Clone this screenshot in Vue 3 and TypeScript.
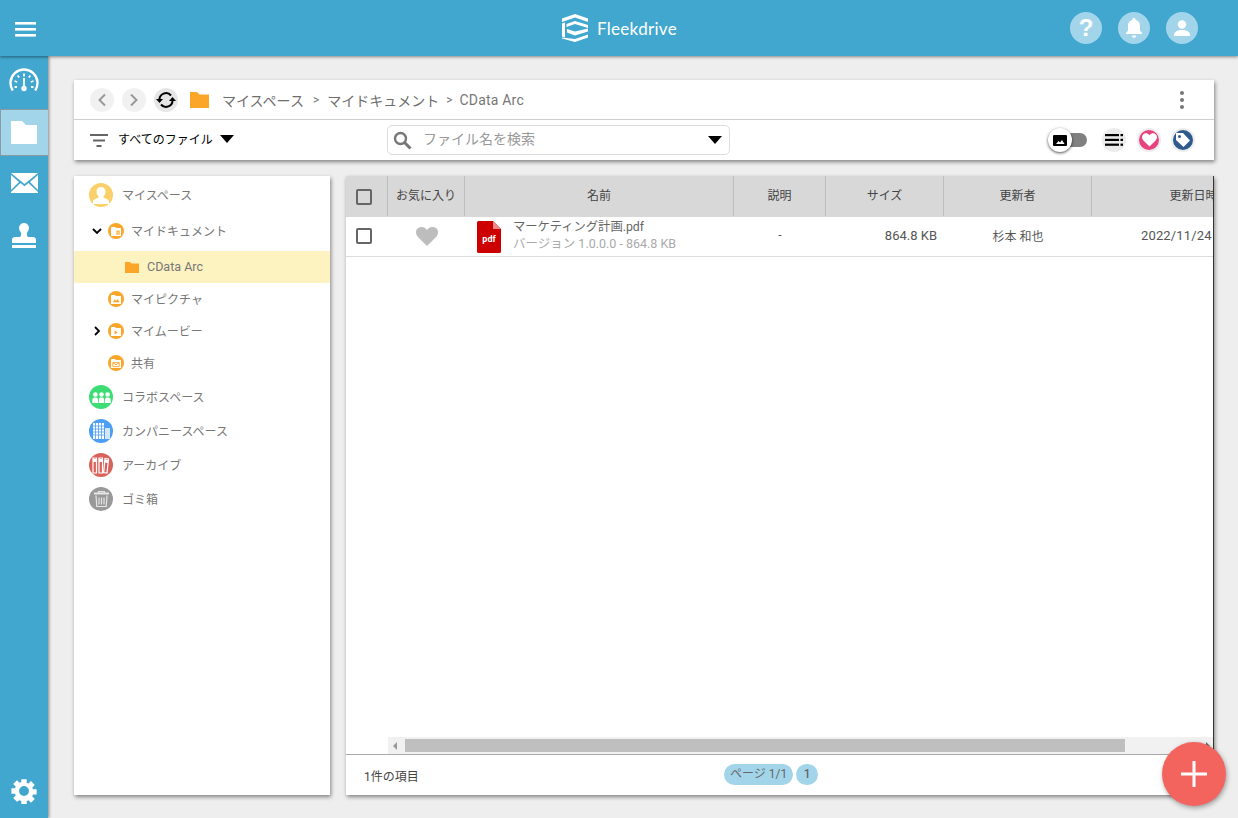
<script setup lang="ts">
interface TreeRow {
  label: string
  level: 'root' | 'child' | 'leaf'
  color?: string
  chevron?: 'down' | 'right'
  icon: string
  active?: boolean
}
const rows: TreeRow[] = [
  { label: 'マイスペース', level: 'root', color: '#fbd06b', icon: 'user' },
  { label: 'マイドキュメント', level: 'child', color: '#fba629', chevron: 'down', icon: 'doc' },
  { label: 'CData Arc', level: 'leaf', icon: 'folder', active: true },
  { label: 'マイピクチャ', level: 'child', color: '#fba629', icon: 'pic' },
  { label: 'マイムービー', level: 'child', color: '#fba629', chevron: 'right', icon: 'movie' },
  { label: '共有', level: 'child', color: '#fba629', icon: 'share' },
  { label: 'コラボスペース', level: 'root', color: '#3ddc75', icon: 'team' },
  { label: 'カンパニースペース', level: 'root', color: '#4d9ff5', icon: 'company' },
  { label: 'アーカイブ', level: 'root', color: '#d9635c', icon: 'archive' },
  { label: 'ゴミ箱', level: 'root', color: '#999999', icon: 'trash' },
]
</script>

<template>
  <div class="app">
    <header class="topbar">
      <svg class="burger" width="22" height="16" viewBox="0 0 22 16" fill="#fff">
        <rect x="0" y="0" width="21" height="2.6" /><rect x="0" y="6" width="21" height="2.6" /><rect x="0" y="12" width="21" height="2.6" />
      </svg>
      <div class="brand">
        <svg width="28" height="28" viewBox="0 0 28 28" fill="#fff">
          <path d="M14 0 27 4.500V8L14 3.500 1 8V4.500Z" />
          <path d="M1 9.500 4 8.500V23.500L1 22.500Z" />
          <path d="M5.500 10 14 7 27 11V14L14 10 5.500 13Z" />
          <path d="M6 15 14 17.500 27 14.500V17.500L14 21.500 6 18.500Z" />
          <path d="M1 23.500 14 25 27 20.500V23.500L14 28 1 24.500Z" />
        </svg>
        <span class="brand-name">Fleekdrive</span>
      </div>
      <div class="top-actions">
        <span class="top-circle"><span class="q">?</span></span>
        <span class="top-circle">
          <svg width="20" height="22" viewBox="0 0 20 22" fill="#fff"><path d="M10 1a1.6 1.6 0 0 1 1.6 1.8C14.6 3.6 16 6 16 9v4.5l2 2.500v1H2v-1l2-2.500V9c0-3 1.400-5.400 4.400-6.200A1.600 1.600 0 0 1 10 1z" /><path d="M7.800 18.500h4.400a2.200 2.200 0 0 1-4.400 0z" /></svg>
        </span>
        <span class="top-circle">
          <svg width="20" height="20" viewBox="0 0 20 20" fill="#fff"><circle cx="10" cy="6.500" r="4.200" /><path d="M2 17c0-3.500 3.500-5 8-5s8 1.500 8 5v1H2z" /></svg>
        </span>
      </div>
    </header>

    <div class="body">
      <nav class="rail">
        <div class="rail-item dash">
          <svg width="30" height="24" viewBox="0 0 30 24" fill="none" stroke="#fff" stroke-width="2.400">
            <path d="M3.800 22.500A13.500 13.500 0 1 1 26.200 22.500" />
            <path d="M15 5.500v3M8.500 7.500l1.800 2M21.500 7.500l-1.800 2M5.500 13l2.700 1M24.500 13l-2.700 1" stroke-width="1.800" />
            <path d="M5.500 19h2.500M24.500 19h-2.500" stroke-width="1.800" />
            <path d="M15 10v10" stroke-width="1.800" />
            <circle cx="15" cy="20.500" r="2.700" fill="#fff" stroke="none" />
          </svg>
        </div>
        <div class="rail-item active">
          <svg width="26" height="23" viewBox="0 0 26 23" fill="#fff"><path d="M0 0h11l4 4h11v19H0z" /></svg>
        </div>
        <div class="rail-item mail">
          <svg width="27" height="20" viewBox="0 0 27 20" fill="#fff"><path d="M0 0h27L13.500 11z" /><path d="M0 2l8 7-8 8zM27 2l-8 7 8 8zM0 19l9.500-9 4 3.300 4-3.300 9.500 9v1H0z" /></svg>
        </div>
        <div class="rail-item stamp">
          <svg width="24" height="26" viewBox="0 0 24 26" fill="#fff"><path d="M12 0a5 5 0 0 1 5 5c0 2-1.500 3.500-2 5-.400 1.500 0 3 1 4h5c1.600 0 3 1.200 3 3v3H0v-3c0-1.800 1.400-3 3-3h5c1-1 1.400-2.500 1-4-.500-1.500-2-3-2-5a5 5 0 0 1 5-5z" /><rect x="0" y="22" width="24" height="3" rx="0.500" /></svg>
        </div>
        <div class="rail-gear">
          <svg width="26" height="26" viewBox="0 0 26 26">
            <path fill="#fff" fill-rule="evenodd" d="M10 0h6v4l2 .800 2.800-2.800 4.200 4.200-2.800 2.800.800 2h4v6h-4l-.800 2 2.800 2.800-4.200 4.200-2.800-2.800-2 .800v4h-6v-4l-2-.800L5.200 25 1 20.800 3.800 18 3 16H-1v-6h4l.800-2L1 5.200 5.200 1 8 3.800 10 3zM13 7.500a5.500 5.500 0 1 0 0 11 5.500 5.500 0 0 0 0-11z" transform="translate(1.300 1.300) scale(0.900)" />
          </svg>
        </div>
      </nav>

      <main class="main">
        <section class="toolbar">
          <div class="crumbs">
            <span class="nav-btn">
              <svg width="10" height="14" viewBox="0 0 10 14" fill="none" stroke="#999" stroke-width="2"><path d="M8 1.500 2.500 7 8 12.500" /></svg>
            </span>
            <span class="nav-btn">
              <svg width="10" height="14" viewBox="0 0 10 14" fill="none" stroke="#999" stroke-width="2"><path d="M2 1.500 7.500 7 2 12.500" /></svg>
            </span>
            <span class="nav-btn sync">
              <svg width="20" height="18" viewBox="0 0 20 18" fill="none" stroke="#000" stroke-width="2">
                <path d="M3.500 9A6.500 6.500 0 0 1 15 4.500" /><path d="M16.500 9A6.500 6.500 0 0 1 5 13.500" />
                <path d="M0 8h7L3.500 12z" fill="#000" stroke="none" />
                <path d="M13 10h7l-3.500-4z" fill="#000" stroke="none" />
              </svg>
            </span>
            <svg class="crumb-folder" width="19" height="16" viewBox="0 0 19 16" fill="#fba629"><path d="M0 0h7l2.500 2.500H19V16H0z" /></svg>
            <span class="crumb big">マイスペース</span>
            <span class="sep first">&gt;</span>
            <span class="crumb big">マイドキュメント</span>
            <span class="sep">&gt;</span>
            <span class="crumb small">CData Arc</span>
            <span class="kebab"><i /><i /><i /></span>
          </div>
          <div class="filters">
            <svg class="filter-icon" width="18" height="14" viewBox="0 0 18 14" fill="#666"><rect width="18" height="2" /><rect x="3" y="5.500" width="12" height="2" /><rect x="6.500" y="11" width="5" height="2" /></svg>
            <span class="filter-label">すべてのファイル</span>
            <span class="caret filter-caret" />
            <div class="search">
              <svg width="19" height="19" viewBox="0 0 19 19" fill="none" stroke="#777" stroke-width="2.400"><circle cx="7.500" cy="7.500" r="5.500" /><path d="m11.500 11.500 6 6" stroke-width="3" /></svg>
              <span class="placeholder">ファイル名を検索</span>
              <span class="caret search-caret" />
            </div>
            <div class="view-tools">
              <div class="toggle">
                <span class="track" />
                <span class="knob">
                  <svg width="14" height="11" viewBox="0 0 14 11"><rect width="14" height="11" rx="1" fill="#000" /><path d="M3 9l2.500-3 1.500 1.500L9 5l2.500 4z" fill="#fff" /></svg>
                </span>
              </div>
              <span class="tool-circle list">
                <svg width="18" height="12" viewBox="0 0 18 12" fill="#000"><rect width="14" height="2.200" /><rect y="4.800" width="14" height="2.200" /><rect y="9.600" width="14" height="2.200" /><rect x="15.500" width="2.500" height="2.200" /><rect x="15.500" y="4.800" width="2.500" height="2.200" /><rect x="15.500" y="9.600" width="2.500" height="2.200" /></svg>
              </span>
              <span class="tool-circle heart">
                <svg width="15" height="14" viewBox="0 0 16 15" fill="#fff"><path d="M8 14.500 1.500 8C-.500 6-.500 3 1.200 1.500 3-.200 6-.200 8 2.500c2-2.700 5-2.700 6.800-1 1.700 1.500 1.700 4.500-.300 6.500z" /></svg>
              </span>
              <span class="tool-circle tag">
                <svg width="16" height="16" viewBox="0 0 16 16"><path fill="#fff" fill-rule="evenodd" d="M1 1h7l7 7.500L8.500 15 1 8zM4.500 3a1.500 1.500 0 1 0 0 3 1.500 1.500 0 0 0 0-3z" /></svg>
              </span>
            </div>
          </div>
        </section>

        <div class="panels">
          <aside class="tree">
            <div v-for="r in rows" :key="r.label" class="tree-row" :class="[r.level, { active: r.active }]">
              <span v-if="r.level === 'child'" class="chev">
                <svg v-if="r.chevron === 'down'" width="10" height="7" viewBox="0 0 10 7" fill="none" stroke="#000" stroke-width="1.800"><path d="M1 1l4 4 4-4" /></svg>
                <svg v-else-if="r.chevron === 'right'" width="7" height="10" viewBox="0 0 7 10" fill="none" stroke="#000" stroke-width="1.800"><path d="M1 1l4 4-4 4" /></svg>
              </span>
              <svg v-if="r.icon === 'folder'" class="leaf-folder" width="14" height="11" viewBox="0 0 14 11" fill="#fba629"><path d="M0 0h5l1.500 1.500H14V11H0z" /></svg>
              <span v-else class="badge" :style="{ background: r.color }">
                <svg v-if="r.icon === 'user'" width="16" height="17" viewBox="0 0 16 17" fill="#fff"><path d="M8 0c2.800 0 4.500 2 4.500 4.800 0 2-1 3.600-2 4.700v1.200c2.500.800 5.500 1.800 5.500 3.800V17H0v-2.500c0-2 3-3 5.500-3.800V9.500c-1-1.100-2-2.700-2-4.700C3.500 2 5.200 0 8 0z" /></svg>
                <svg v-else-if="r.icon === 'doc'" width="10" height="9" viewBox="0 0 11 10"><path fill="#fff" d="M0 0h4.500l1 1.200H11V10H0z" /><path fill="#fba629" d="M6 4h3.500v4.500H6z" /><path fill="#fff" d="M7 5h1.500v2.500H7z" opacity="0.6" /></svg>
                <svg v-else-if="r.icon === 'pic'" width="10" height="9" viewBox="0 0 11 10"><path fill="#fff" d="M0 0h4.500l1 1.200H11V10H0z" /><path fill="#fba629" d="M2 8l2.200-3 1.600 1.500L7.500 4.500 9.500 8z" /></svg>
                <svg v-else-if="r.icon === 'movie'" width="10" height="9" viewBox="0 0 11 10"><path fill="#fff" d="M0 0h4.500l1 1.200H11V10H0z" /><path fill="#fba629" d="M4 4l3.500 2L4 8z" /></svg>
                <svg v-else-if="r.icon === 'share'" width="10" height="9" viewBox="0 0 11 10"><path fill="#fff" d="M0 0h4.500l1 1.200H11V10H0z" /><path fill="none" stroke="#fba629" d="M2 4h7v4.500H2zM2 4l3.500 2.500L9 4" /></svg>
                <svg v-else-if="r.icon === 'team'" width="19" height="11" viewBox="0 0 20 12" fill="#fff"><circle cx="3.300" cy="2.800" r="2.500" /><circle cx="10" cy="2.800" r="2.500" /><circle cx="16.700" cy="2.800" r="2.500" /><path d="M0 12V8.500C0 6.500 1.500 6 3.300 6S6.200 6.500 6.200 8.500V12zM7 12V8.500C7 6.500 8.200 6 10 6s3 .5 3 2.500V12zM13.800 12V8.500c0-2 1.100-2.500 2.900-2.500S20 6.500 20 8.500V12z" /></svg>
                <svg v-else-if="r.icon === 'company'" width="17" height="16" viewBox="0 0 17 16"><rect width="11" height="16" fill="#fff" /><rect x="12" y="5" width="5" height="11" fill="#fff" opacity="0.75" /><path stroke="#4d9ff5" stroke-width="0.800" d="M2.500 0v16M5.500 0v16M8.500 0v16M0 3h11M0 6h11M0 9h11M0 12h11" /></svg>
                <svg v-else-if="r.icon === 'archive'" width="18" height="17" viewBox="0 0 18 17" fill="none" stroke="#fff" stroke-width="1.200"><path d="M1 1h3.500v15H1zM7 1h3.500v15H7zM13 1.500l3.500.500-1.500 14-3.300-.5z" /><path d="M1 3.500h3.500M7 3.500h3.500M13 4l3.500 .5" stroke-width="3" /></svg>
                <svg v-else width="15" height="16" viewBox="0 0 15 16" fill="none" stroke="#e6e6e6" stroke-width="1.200"><path d="M0 2.500h15" stroke-width="2" /><path d="M4.500 2V.6h6V2" /><path d="M2 4.500 2.800 15.500h9.400L13 4.500M5 6.500v7M7.500 6.500v7M10 6.500v7" /></svg>
              </span>
              <span class="tree-label">{{ r.label }}</span>
            </div>
          </aside>

          <section class="listing">
            <div class="grid-viewport">
              <div class="grid grid-head">
                <div class="cell c-check"><span class="box" /></div>
                <div class="cell c-fav"><span class="lift">お気に入り</span></div>
                <div class="cell c-name"><span class="lift">名前</span></div>
                <div class="cell c-desc"><span class="lift">説明</span></div>
                <div class="cell c-size"><span class="lift">サイズ</span></div>
                <div class="cell c-user"><span class="lift">更新者</span></div>
                <div class="cell c-date"><span class="lift">更新日時</span></div>
              </div>
              <div class="grid grid-row">
                <div class="cell c-check"><span class="box" /></div>
                <div class="cell c-fav">
                  <svg width="22" height="19" viewBox="0 0 22 19" fill="#bdbdbd"><path d="M11 19 2 10C-.700 7.200-.600 3.200 1.700 1.300 4.200-.800 8.500-.500 11 3c2.500-3.500 6.800-3.800 9.300-1.700 2.300 1.900 2.400 5.900-.300 8.700z" /></svg>
                </div>
                <div class="cell c-name file">
                  <svg class="pdf-icon" width="24" height="32" viewBox="0 0 24 32">
                    <path d="M1.500 0H16l8 8v22.500a1.500 1.500 0 0 1-1.500 1.500h-21A1.500 1.500 0 0 1 0 30.500v-29A1.500 1.500 0 0 1 1.500 0z" fill="#cc0000" />
                    <path d="M16 0l8 8h-8z" fill="#f08a8a" />
                    <text x="12" y="21" text-anchor="middle" fill="#fff" font-size="9" font-weight="700" font-family="Roboto, sans-serif">pdf</text>
                  </svg>
                  <div class="file-text">
                    <div class="file-name">マーケティング計画.pdf</div>
                    <div class="file-ver">バージョン 1.0.0.0 - 864.8 KB</div>
                  </div>
                </div>
                <div class="cell c-desc dim"><span class="lift">-</span></div>
                <div class="cell c-size dim num-cell"><span class="lift">864.8 KB</span></div>
                <div class="cell c-user dim"><span class="lift">杉本 和也</span></div>
                <div class="cell c-date dim num-cell date-cell"><span class="lift">2022/11/24</span></div>
              </div>
            </div>
            <div class="hscroll">
              <span class="arrow left" />
              <span class="thumb" />
              <span class="arrow right" />
            </div>
            <footer class="list-foot">
              <span class="count">1件の項目</span>
              <div class="pager">
                <span class="pill">ページ 1/1</span>
                <span class="pill num">1</span>
              </div>
            </footer>
          </section>
        </div>
      </main>
    </div>

    <button class="fab" aria-label="add">
      <svg width="26" height="26" viewBox="0 0 26 26" fill="#fff"><rect x="11.500" width="3" height="26" /><rect y="11.500" width="26" height="3" /></svg>
    </button>
  </div>
</template>

<style>
html, body { margin: 0; height: 100%; overflow: hidden; }
</style>

<style scoped>
.app {
  position: relative;
  height: 818px;
  display: flex;
  flex-direction: column;
  font-family: Roboto, "Noto Sans CJK JP", sans-serif;
  background: #eeeeee;
  overflow: hidden;
}
.topbar {
  height: 56px;
  flex: none;
  background: #41a7cf;
  display: flex;
  align-items: center;
  position: relative;
  z-index: 3;
  box-shadow: 0 1px 3px rgba(0, 0, 0, 0.45);
}
.burger { margin-left: 15px; margin-top: 4px; }
.brand {
  position: absolute;
  left: 561px;
  top: 14px;
  display: flex;
  align-items: center;
  gap: 8px;
}
.brand-name { color: #fff; font-family: Lato, sans-serif; font-size: 17px; letter-spacing: 0.3px; }
.top-actions { margin-left: auto; margin-right: 40px; display: flex; gap: 16px; }
.top-circle {
  width: 32px;
  height: 32px;
  border-radius: 50%;
  background: #a2d5ea;
  display: flex;
  align-items: center;
  justify-content: center;
}
.q { color: #fff; font-weight: 700; font-size: 24px; font-family: "Liberation Sans", sans-serif; line-height: 1; }
.body { flex: 1; display: flex; min-height: 0; }
.rail {
  width: 48px;
  flex: none;
  background: #41a7cf;
  display: flex;
  flex-direction: column;
  position: relative;
  z-index: 2;
  box-shadow: 1px 0 3px rgba(0, 0, 0, 0.45);
}
.rail-item { display: flex; align-items: center; justify-content: center; }
.dash { height: 53px; box-sizing: border-box; padding-bottom: 5px; }
.active.rail-item {
  height: 47px;
  background: #a2d5ea;
  border: 1px solid #8a9aa3;
  border-right: none;
  box-sizing: border-box;
  padding-right: 2px;
}
.mail { height: 54px; }
.stamp { height: 52px; }
.rail-gear { margin-top: auto; height: 54px; display: flex; align-items: center; justify-content: center; }
.main {
  flex: 1;
  min-width: 0;
  padding: 24px 24px 23px 26px;
  display: flex;
  flex-direction: column;
  gap: 16px;
}
.toolbar {
  height: 80px;
  flex: none;
  background: #fff;
  box-shadow: 1px 2px 4px rgba(0, 0, 0, 0.45);
  display: flex;
  flex-direction: column;
}
.crumbs {
  height: 39px;
  flex: none;
  border-bottom: 1px solid #cfcfcf;
  display: flex;
  align-items: center;
  padding: 0 16px;
}
.nav-btn {
  width: 24px;
  height: 24px;
  border-radius: 50%;
  background: #f1f1f1;
  margin-right: 8px;
  display: flex;
  align-items: center;
  justify-content: center;
}
.sync { background: #e6e6e6; margin-right: 0; }
.crumb-folder { margin-left: 12px; margin-right: 13px; }
.crumb { color: #6e6e6e; }
.big { font-size: 14px; }
.small { font-size: 14px; color: #777; letter-spacing: 0.2px; }
.sep { color: #777; font-size: 12px; margin: 0 7px; }
.sep.first { margin: 0 8px 0 9px; }
.kebab { margin-left: auto; margin-right: 14px; display: flex; flex-direction: column; gap: 3px; }
.kebab i { width: 4px; height: 4px; border-radius: 50%; background: #777; display: block; }
.filters { flex: 1; display: flex; align-items: center; padding-left: 16px; }
.filter-icon { margin-top: 2px; }
.filter-label { margin-left: 10px; margin-bottom: 3px; font-size: 12px; color: #000; width: 96px; white-space: nowrap; }
.caret {
  width: 0;
  height: 0;
  border-left: 7px solid transparent;
  border-right: 7px solid transparent;
  border-top: 8px solid #000;
  display: block;
}
.filter-caret { margin-left: 6px; margin-top: -2px; }
.search {
  margin-left: 153px;
  width: 343px;
  height: 30px;
  border: 1px solid #dcdcdc;
  border-radius: 5px;
  box-sizing: border-box;
  display: flex;
  align-items: center;
  padding: 0 7px 0 5px;
}
.placeholder { margin-left: 11px; margin-bottom: 4px; font-size: 14px; color: #999; }
.search-caret { margin-left: auto; }
.view-tools { margin-left: auto; display: flex; align-items: center; margin-right: 19px; }
.toggle { position: relative; width: 39px; height: 24px; margin-right: 15px; }
.track {
  position: absolute;
  left: 15px;
  top: 5px;
  width: 24px;
  height: 14px;
  border-radius: 7px;
  background: #808080;
}
.knob {
  position: absolute;
  left: 0;
  top: 0;
  width: 24px;
  height: 24px;
  border-radius: 50%;
  background: #fff;
  box-shadow: 0 1px 3px rgba(0, 0, 0, 0.7);
  display: flex;
  align-items: center;
  justify-content: center;
}
.tool-circle {
  width: 24px;
  height: 24px;
  border-radius: 50%;
  display: flex;
  align-items: center;
  justify-content: center;
  box-sizing: border-box;
  margin-right: 11px;
}
.tool-circle:last-child { margin-right: 0; margin-left: -1px; }
.list { background: #ececec; }
.heart { background: #e6427f; border: 2px solid #ececec; }
.tag { background: #2f5a8c; border: 2px solid #ececec; }
.panels { flex: 1; min-height: 0; display: flex; gap: 16px; }
.tree {
  width: 256px;
  flex: none;
  background: #fff;
  box-shadow: 1px 2px 4px rgba(0, 0, 0, 0.45);
  box-sizing: border-box;
}
.tree-row { display: flex; align-items: center; color: #777; font-size: 12px; white-space: nowrap; }
.tree-row.root { height: 34px; padding-left: 15px; }
.tree-row.root .badge { width: 24px; height: 24px; margin-right: 9px; }
.tree-row.child { height: 32px; padding-left: 18px; }
.tree-row.child .badge { width: 16px; height: 16px; margin-right: 7px; }
.tree-row.leaf { height: 32px; padding-left: 51px; background: #fdf3c1; font-size: 12.500px; margin-top: 3px; }
.leaf-folder { margin-right: 8px; }
.tree-row:nth-child(1) { height: 38px; }
.tree-row:nth-child(2) { height: 34px; }
.tree-row:nth-child(7) { margin-top: 1px; }
.tree-label { margin-bottom: 2px; }
.chev { width: 10px; margin-right: 6px; display: flex; justify-content: center; }
.badge { border-radius: 50%; display: flex; align-items: center; justify-content: center; flex: none; }
.listing {
  flex: 1;
  min-width: 0;
  background: #fff;
  box-shadow: 1px 2px 4px rgba(0, 0, 0, 0.45);
  border-right: 1px solid #333;
  display: flex;
  flex-direction: column;
}
.grid-viewport { flex: 1; min-height: 0; overflow: hidden; }
.grid {
  display: grid;
  grid-template-columns: 42px 77px 269px 92px 118px 148px 204px;
  width: 950px;
  box-sizing: border-box;
}
.grid-head { height: 41px; background: #d8d8d8; color: #444; font-size: 12px; }
.grid-head .cell { border-right: 1px solid #bdbdbd; height: 40px; }
.grid-head .box { margin-top: 1px; }
.grid-row { height: 40px; border-bottom: 1px solid #dddddd; width: 100%; font-size: 12px; color: #555; }
.grid-row .box { margin-bottom: 1px; }
.cell { display: flex; align-items: center; justify-content: center; box-sizing: border-box; white-space: nowrap; }
.grid-row .cell { height: 39px; }
.lift { display: block; margin-bottom: 3px; }
.box {
  width: 12px;
  height: 12px;
  border: 2px solid #666;
  border-radius: 2px;
  display: block;
}
.c-check { justify-content: flex-start; padding-left: 10px; }
.c-size.dim { justify-content: flex-end; padding-right: 7px; }
.c-date.dim { justify-content: flex-start; padding-left: 49px; }
.num-cell { font-size: 13px; }
.date-cell { letter-spacing: 0.15px; }
.dim { color: #555; }
.file { justify-content: flex-start; padding-left: 12px; gap: 12px; }
.pdf-icon { flex: none; }
.file-text { line-height: 16px; margin-bottom: 3px; }
.file-name { font-size: 12.300px; color: #666; }
.file-ver { font-size: 12.500px; color: #aaa; margin-top: 1px; }
.hscroll {
  flex: none;
  height: 17px;
  margin-left: 42px;
  background: #f1f1f1;
  display: flex;
  align-items: center;
  position: relative;
}
.thumb { margin-left: 17px; width: 720px; height: 13px; background: #bfbfbf; display: block; }
.arrow { width: 0; height: 0; border-top: 4px solid transparent; border-bottom: 4px solid transparent; position: absolute; top: 5px; }
.arrow.left { left: 5px; border-right: 4px solid #999; }
.arrow.right { right: 3px; border-left: 4px solid #666; }
.list-foot {
  height: 41px;
  box-sizing: border-box;
  flex: none;
  border-top: 1px solid #aaa;
  display: flex;
  align-items: center;
  position: relative;
  padding-left: 18px;
  font-size: 12px;
  color: #444;
}
.pager { position: absolute; left: 378px; top: 9px; display: flex; gap: 3px; }
.pill {
  height: 21px;
  line-height: 20px;
  border-radius: 11px;
  background: #a2d5ea;
  color: #666;
  font-size: 12px;
  padding: 0 6px;
  white-space: nowrap;
}
.pill.num { width: 22px; padding: 0; text-align: center; font-weight: 500; }
.fab {
  position: absolute;
  left: 1162px;
  top: 742px;
  width: 64px;
  height: 64px;
  border-radius: 50%;
  border: none;
  padding: 0;
  background: #f4645f;
  box-shadow: 1px 2px 5px rgba(0, 0, 0, 0.35);
  display: flex;
  align-items: center;
  justify-content: center;
  z-index: 5;
}
</style>
